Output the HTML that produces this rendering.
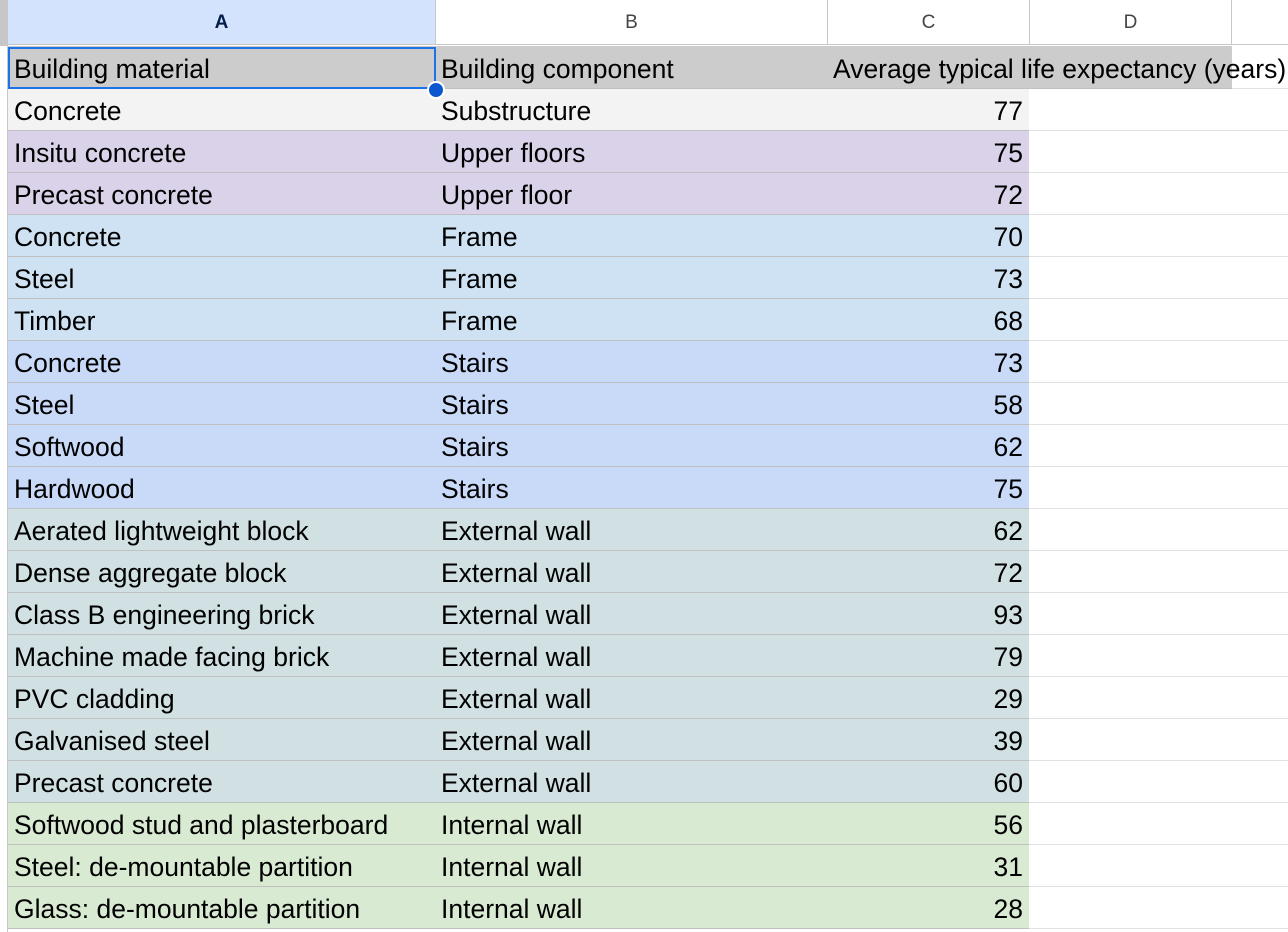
<!DOCTYPE html><html><head><style>
body{margin:0;width:1288px;height:932px;overflow:hidden;background:#fff;font-family:"Liberation Sans",Arial,sans-serif;position:relative}
.h{position:absolute;top:0;height:45px;border-right:1px solid #c7c7c7;border-bottom:1px solid #c7c7c7;font-size:19px;color:#444;text-align:center;line-height:46px;box-sizing:border-box}
.r{position:absolute;left:8px;width:1280px;height:42px}
.c{position:absolute;top:0;height:42px;box-sizing:border-box;border-right:1px solid #c0c0c0;border-bottom:1px solid #c0c0c0;font-size:26.5px;line-height:45px;padding:0 6px;white-space:nowrap;color:#000}
.a{left:0;width:428px}.b{left:427px;width:393px}.n{left:819px;width:203px;text-align:right}.d{left:1021px;width:203px;background:#fff;border-color:#e2e2e3}.e{left:1223px;width:60px;background:#fff;border-color:#e2e2e3}
</style></head><body>
<div style="position:absolute;left:0;top:0;width:8px;height:932px;background:#fff;border-right:1px solid #c7c7c7;box-sizing:border-box"></div>
<div style="position:absolute;left:0;top:0;width:8px;height:46px;background:#c7c7c7"></div>
<div class="h" style="left:8px;width:428px;background:#d3e3fd;color:#041e49;font-weight:bold">A</div>
<div class="h" style="left:436px;width:392px">B</div>
<div class="h" style="left:828px;width:202px">C</div>
<div class="h" style="left:1030px;width:202px">D</div>
<div class="h" style="left:1232px;width:60px"></div>
<div id="t"></div>
<div class="r" style="top:46px;height:43px"><div class="c e" style="height:43px"></div><div class="c a" style="background:#ccc;height:43px;line-height:47px">Building material</div><div class="c b" style="background:#ccc;height:43px;line-height:47px">Building component</div><div class="c" style="left:819px;width:405px;background:#ccc;height:43px;border-right:none"></div><div class="c" style="left:819px;width:470px;background:transparent;height:43px;line-height:47px;border:none;overflow:visible">Average typical life expectancy (years)</div></div>
<div style="position:absolute;left:8px;top:47px;width:428px;height:42px;border:2px solid #1a73e8;box-sizing:border-box"></div>
<div style="position:absolute;left:427px;top:81px;width:14px;height:14px;border-radius:50%;background:#0b57d0;border:2px solid #fff"></div>
<script>
var rows=[["Concrete","Substructure",77,"#f3f3f3"],["Insitu concrete","Upper floors",75,"#d9d2e9"],["Precast concrete","Upper floor",72,"#d9d2e9"],["Concrete","Frame",70,"#cfe2f3"],["Steel","Frame",73,"#cfe2f3"],["Timber","Frame",68,"#cfe2f3"],["Concrete","Stairs",73,"#c9daf8"],["Steel","Stairs",58,"#c9daf8"],["Softwood","Stairs",62,"#c9daf8"],["Hardwood","Stairs",75,"#c9daf8"],["Aerated lightweight block","External wall",62,"#d0e0e3"],["Dense aggregate block","External wall",72,"#d0e0e3"],["Class B engineering brick","External wall",93,"#d0e0e3"],["Machine made facing brick","External wall",79,"#d0e0e3"],["PVC cladding","External wall",29,"#d0e0e3"],["Galvanised steel","External wall",39,"#d0e0e3"],["Precast concrete","External wall",60,"#d0e0e3"],["Softwood stud and plasterboard","Internal wall",56,"#d9ead3"],["Steel: de-mountable partition","Internal wall",31,"#d9ead3"],["Glass: de-mountable partition","Internal wall",28,"#d9ead3"]];
var h="";rows.forEach(function(r,i){var s="background:"+r[3];h+='<div class="r" style="top:'+(89+42*i)+'px"><div class="c a" style="'+s+'">'+r[0]+'</div><div class="c b" style="'+s+'">'+r[1]+'</div><div class="c n" style="'+s+'">'+r[2]+'</div><div class="c d"></div><div class="c e"></div></div>';});
document.getElementById("t").innerHTML=h;
</script>
</body></html>
